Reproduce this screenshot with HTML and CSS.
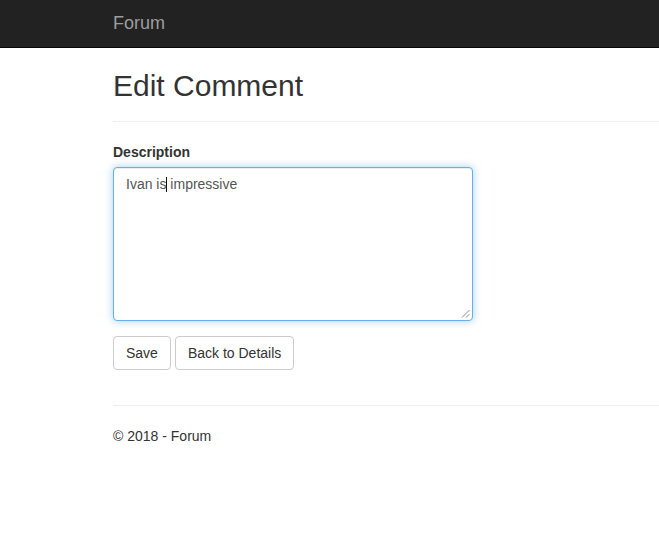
FILE: index.html
```html
<!DOCTYPE html>
<html lang="en">
<head>
<meta charset="utf-8">
<title>Edit Comment - Forum</title>
<link rel="stylesheet" href="styles.css">
</head>
<body>
<nav class="navbar">
  <div class="container">
    <a class="brand" href="#">Forum</a>
  </div>
</nav>
<div class="container body-content">
  <h2 class="title">Edit Comment</h2>
  <hr class="rule">
  <form class="form">
    <div class="form-group">
      <label class="label">Description</label>
      <div class="textarea">Ivan is<span class="caret"></span> impressive<svg class="grip" width="9" height="9" viewBox="0 0 9 9"><line x1="8.5" y1="1" x2="1" y2="8.5" stroke="#8a8a8a" stroke-width="1"/><line x1="8.5" y1="5" x2="5" y2="8.5" stroke="#8a8a8a" stroke-width="1"/></svg></div>
    </div>
    <div class="form-group actions">
      <button type="button" class="btn">Save</button>
      <button type="button" class="btn">Back to Details</button>
    </div>
  </form>
  <hr class="rule footer-rule">
  <footer class="footer">
    <p class="copy">© 2018 - Forum</p>
  </footer>
</div>
</body>
</html>
```
FILE: styles.css
```css
* { box-sizing: border-box; }
html, body {
  margin: 0;
  padding: 0;
  background: #fff;
  overflow: hidden;
}
body {
  font-family: "Liberation Sans", Arial, Helvetica, sans-serif;
  font-size: 14px;
  line-height: 20px;
  color: #333;
}
.navbar {
  height: 48px;
  background: #222;
  border-bottom: 1px solid #080808;
}
.container {
  padding-left: 113px;
}
.brand {
  display: block;
  font-size: 18px;
  line-height: 20px;
  padding-top: 13px;
  color: #9d9d9d;
  text-decoration: none;
}
.title {
  margin: 21px 0 0;
  font-size: 30px;
  line-height: 33px;
  font-weight: 500;
  color: #333;
}
.rule {
  margin: 19px 0 20px;
  border: 0;
  border-top: 1px solid #eee;
  height: 0;
}
.form { margin: 0; }
.form-group {
  margin-bottom: 15px;
}
.label {
  display: block;
  font-weight: bold;
  margin-bottom: 5px;
}
.textarea {
  position: relative;
  width: 360px;
  height: 154px;
  padding: 6px 12px;
  border: 1px solid #66afe9;
  border-radius: 4px;
  color: #555;
  background: #fff;
  box-shadow: inset 0 1px 1px rgba(0,0,0,.075), 0 0 8px rgba(102,175,233,.6);
}
.caret {
  display: inline-block;
  width: 1px;
  height: 15px;
  margin-right: -1px;
  vertical-align: -3px;
  background: #111;
}
.grip {
  position: absolute;
  right: 2px;
  bottom: 2px;
}
.actions {
  display: flex;
  gap: 4px;
}
.btn {
  height: 34px;
  padding: 6px 12px;
  font-family: inherit;
  font-size: 14px;
  line-height: 20px;
  color: #333;
  background: #fff;
  border: 1px solid #ccc;
  border-radius: 4px;
}
.footer-rule {
  margin-top: 35px;
}
.copy {
  margin: 0;
}
```
